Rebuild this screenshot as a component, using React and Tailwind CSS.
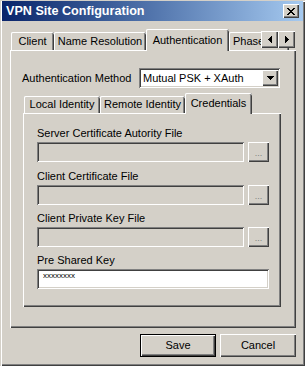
const raised =
  "shadow-[inset_1px_1px_0_#fff,inset_-1px_-1px_0_#404040,inset_-2px_-2px_0_#808080]";
const sunken =
  "shadow-[inset_1px_1px_0_#808080,inset_-1px_-1px_0_#fff,inset_2px_2px_0_#404040,inset_-2px_-2px_0_#d4d0c8]";
const tabEdge =
  "shadow-[inset_1px_0_0_#fff,inset_0_1px_0_#fff,inset_-1px_0_0_#404040,inset_-2px_0_0_#808080]";
const panelEdge =
  "shadow-[inset_1px_1px_0_#fff,inset_-1px_-1px_0_#404040,inset_-2px_-2px_0_#808080]";

const closeRows = ["11000011", "01100110", "00111100", "00011000", "00111100", "01100110", "11000011"];

function PixelGlyph({ rows }) {
  return (
    <svg width={rows[0].length} height={rows.length} shapeRendering="crispEdges">
      {rows.map((r, y) =>
        r.split("").map((c, x) => (c === "1" ? <rect key={x + "-" + y} x={x} y={y} width="1" height="1" fill="#000" /> : null))
      )}
    </svg>
  );
}

const Tab = ({ label, width, selected, small }) =>
  selected ? (
    <div
      className={`relative z-10 flex items-start justify-center bg-[#d4d0c8] rounded-t-[2px] -mb-[1px] ${tabEdge} ${small ? "h-[21px] pt-[2px]" : "h-[22px] pt-[3px]"}`}
      style={{ width }}
    >
      {label}
    </div>
  ) : (
    <div
      className={`flex items-center justify-center rounded-t-[2px] overflow-hidden whitespace-nowrap ${tabEdge} ${small ? "h-[17px]" : "h-[18px]"}`}
      style={{ width }}
    >
      {label}
    </div>
  );

const FileField = ({ label, className }) => (
  <div className={"flex flex-col " + className}>
    <div className="h-[13px] leading-[13px] mb-[2px]">{label}</div>
    <div className="flex items-center gap-[4px]">
      <div className={`w-[207px] h-[20px] ${sunken}`} />
      <div className={`w-[21px] h-[20px] flex items-end justify-center pb-[4px] text-[9px] leading-none text-[#808080] ${raised}`}>
        ...
      </div>
    </div>
  </div>
);

export default function App() {
  return (
    <div className="w-[305px] h-[366px] bg-[#d4d0c8] flex flex-col px-[2px] pt-[1px] text-[11px] text-black font-['Liberation_Sans',Arial,sans-serif] shadow-[inset_1px_1px_0_#d4d0c8,inset_2px_2px_0_#fff,inset_-1px_-1px_0_#404040,inset_-2px_-2px_0_#808080]">
      {/* title bar */}
      <div className="h-[20px] flex items-center pl-[4px] pr-[4px] bg-linear-to-r from-[#0a246a] to-[#a6caf0]">
        <span className="text-white font-bold text-[12.6px] leading-none">VPN Site Configuration</span>
        <div className={`ml-auto w-[16px] h-[14px] bg-[#d4d0c8] flex items-center justify-center ${raised}`}>
          <PixelGlyph rows={closeRows} />
        </div>
      </div>

      {/* outer tabs */}
      <div className="ml-[8px] mt-[8px] w-[286px]">
        <div className="relative flex items-end h-[21px]">
          <div className="w-[1px]" />
          <Tab label="Client" width={43} />
          <Tab label="Name Resolution" width={92} />
          <Tab label="Authentication" width={83} selected />
          <div className={`flex items-center pl-[4px] h-[18px] w-[60px] whitespace-nowrap overflow-hidden rounded-t-[2px] ${tabEdge}`}>
            Phase 1
          </div>
          <div className="absolute right-[1px] top-[2px] flex z-20">
            <div className={`w-[17px] h-[17px] bg-[#d4d0c8] flex items-center justify-center ${raised}`}>
              <PixelGlyph rows={["0001", "0011", "0111", "1111", "0111", "0011", "0001"]} />
            </div>
            <div className={`w-[17px] h-[17px] bg-[#d4d0c8] flex items-center justify-center ${raised}`}>
              <PixelGlyph rows={["1000", "1100", "1110", "1111", "1110", "1100", "1000"]} />
            </div>
          </div>
        </div>

        <div className={`h-[278px] pt-[18px] pl-[12px] ${panelEdge}`}>
          <div className="flex items-center h-[20px]">
            <div className="w-[117px]">Authentication Method</div>
            <div className={`w-[141px] h-[20px] bg-white flex items-center pl-[4px] pr-[2px] ${sunken}`}>
              <span>Mutual PSK + XAuth</span>
              <div className={`ml-auto w-[16px] h-[16px] bg-[#d4d0c8] flex items-center justify-center ${raised}`}>
                <PixelGlyph rows={["1111111", "0111110", "0011100", "0001000"]} />
              </div>
            </div>
          </div>

          {/* inner tabs */}
          <div className="mt-[5px] ml-[1px] w-[258px]">
            <div className="flex items-end h-[20px]">
              <div className="w-[1px]" />
              <Tab label="Local Identity" width={76} small />
              <Tab label="Remote Identity" width={85} small />
              <Tab label="Credentials" width={67} selected small />
            </div>
            <div className={`h-[194px] pt-[14px] pl-[14px] ${panelEdge}`}>
              <FileField label="Server Certificate Autority File" />
              <FileField label="Client Certificate File" className="mt-[8px]" />
              <FileField label="Client Private Key File" className="mt-[7px]" />
              <div className="flex flex-col mt-[7px]">
                <div className="h-[13px] leading-[13px] mb-[2px]">Pre Shared Key</div>
                <div className={`w-[232px] h-[20px] bg-white pl-[6px] pt-[3px] text-[8px] leading-[8px] ${sunken}`}>
                  xxxxxxxx
                </div>
              </div>
            </div>
          </div>
        </div>
      </div>

      {/* buttons */}
      <div className="ml-[8px] w-[286px] mt-[6px] flex justify-end gap-[4px]">
        <div className="w-[76px] h-[23px] border border-black flex items-center justify-center shadow-[inset_1px_1px_0_#fff,inset_-1px_-1px_0_#404040,inset_-2px_-2px_0_#808080]">
          Save
        </div>
        <div className={`w-[76px] h-[23px] flex items-center justify-center ${raised}`}>Cancel</div>
      </div>
    </div>
  );
}
